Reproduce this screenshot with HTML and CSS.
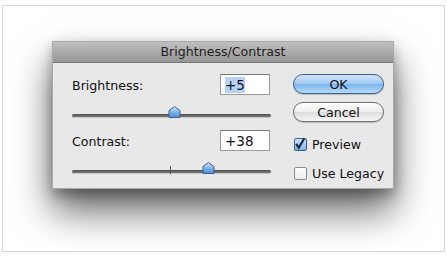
FILE: index.html
```html
<!DOCTYPE html>
<html lang="en">
<head>
  <meta charset="UTF-8">
  <title>Brightness/Contrast</title>
  <link rel="stylesheet" href="styles.css">
</head>
<body>
  <div class="frame">
    <div class="dialog">
      <div class="titlebar">Brightness/Contrast</div>
      <div class="dialog-body">
        <div class="controls">
          <div class="field-row">
            <span class="label">Brightness:</span>
            <span class="value-box"><span class="selected">+5</span></span>
          </div>
          <div class="slider">
            <div class="track"></div>
            <svg class="thumb" style="left: 96px" width="13" height="12" viewBox="0 0 13 12">
              <defs>
                <linearGradient id="thumbFill" x1="0" y1="0" x2="0" y2="1">
                  <stop offset="0" stop-color="#d6e8fb"/>
                  <stop offset="0.5" stop-color="#7fb3ea"/>
                  <stop offset="1" stop-color="#4a8fdc"/>
                </linearGradient>
              </defs>
              <path d="M6.5 0.5 L12 4.5 L12 11.5 L1 11.5 L1 4.5 Z" fill="url(#thumbFill)" stroke="#3a5f8f" stroke-width="1"/>
            </svg>
          </div>
          <div class="field-row">
            <span class="label">Contrast:</span>
            <span class="value-box">+38</span>
          </div>
          <div class="slider">
            <div class="track"></div>
            <div class="tick" style="left: 98px"></div>
            <svg class="thumb" style="left: 130px" width="13" height="12" viewBox="0 0 13 12">
              <path d="M6.5 0.5 L12 4.5 L12 11.5 L1 11.5 L1 4.5 Z" fill="url(#thumbFill)" stroke="#3a5f8f" stroke-width="1"/>
            </svg>
          </div>
        </div>
        <div class="actions">
          <button class="btn btn-default">OK</button>
          <button class="btn">Cancel</button>
          <label class="check check-first">
            <span class="box box-on">
              <svg width="14" height="15" viewBox="0 0 14 15">
                <path d="M2.5 8 L5.5 12.5 L12 1.5" fill="none" stroke="#1a2a44" stroke-width="2.4"/>
              </svg>
            </span>
            Preview
          </label>
          <label class="check">
            <span class="box"></span>
            Use Legacy
          </label>
        </div>
      </div>
    </div>
  </div>
</body>
</html>
```

FILE: styles.css
```css
/* page */
body {
  margin: 0;
  background: #fff;
  font-family: "DejaVu Sans", "Liberation Sans", sans-serif;
  font-size: 12.6px;
  color: #111;
}

/* light frame round the picture */
.frame {
  margin: 5px 2px 1px 2px;
  height: 247px;
  border: 1px solid #d6d6d6;
  padding: 35px 0 0 49px;
  box-sizing: border-box;
}

/* the dialog window */
.dialog {
  width: 342px;
  height: 148px;
  background: #e8e8e8;
  border: 1px solid #a9a9a9;
  box-sizing: border-box;
  box-shadow: 0 22px 36px rgba(0, 0, 0, 0.6), 0 6px 12px rgba(0, 0, 0, 0.3);
}

.titlebar {
  height: 20px;
  line-height: 20px;
  text-align: center;
  color: #1c1c1c;
  background: linear-gradient(#c0c0c0, #969696);
  border-bottom: 1px solid #777;
}

.dialog-body {
  display: flex;
  gap: 24px;
  padding: 11px 0 0 19px;
}

/* left column: labels, values and sliders */
.controls {
  width: 197px;
  display: flex;
  flex-direction: column;
}

.field-row {
  height: 21px;
  display: flex;
  align-items: center;
  justify-content: space-between;
}

.label {
  padding-top: 1px;
}

.value-box {
  width: 50px;
  height: 21px;
  box-sizing: border-box;
  background: #fff;
  border: 1px solid #9a9a9a;
  border-top-color: #7a7a7a;
  padding: 2px 0 0 4px;
  margin-right: -1px;
  font-size: 13.5px;
  line-height: 16px;
}

.selected {
  background: #b5d3f7;
}

.slider {
  position: relative;
  height: 35px;
}

.track {
  position: absolute;
  left: 0;
  right: -2px;
  top: 19px;
  height: 3px;
  border-radius: 2px;
  background: linear-gradient(#4e4e4e, #7a7a7a);
  box-shadow: 0 1px 0 #c4c4c4;
}

.tick {
  position: absolute;
  top: 15px;
  width: 1px;
  height: 8px;
  background: #555;
}

.thumb {
  position: absolute;
  top: 11px;
}

/* right column: buttons and checkboxes */
.actions {
  width: 91px;
  display: flex;
  flex-direction: column;
  align-items: flex-start;
}

.btn {
  width: 91px;
  height: 20px;
  border-radius: 10px;
  border: 1px solid #6e6e6e;
  background: linear-gradient(#ffffff, #eeeeee 50%, #dcdcdc 51%, #f6f6f6);
  font-family: inherit;
  font-size: 12.6px;
  color: #111;
  padding: 0;
  margin-bottom: 8px;
  box-shadow: 0 1px 1px rgba(0, 0, 0, 0.2);
}

.btn-default {
  border-color: #3b5f8e;
  background: linear-gradient(#d4e6fa, #9ec8f3 50%, #7db5ee 51%, #b8dbfb);
}

.check {
  display: flex;
  align-items: center;
  gap: 5px;
  height: 13px;
  margin: 16px 0 0 1px;
  white-space: nowrap;
}

.check-first {
  margin-top: 8px;
}

.box {
  flex: none;
  width: 13px;
  height: 13px;
  box-sizing: border-box;
  border: 1px solid #8a8a8a;
  border-radius: 2px;
  background: linear-gradient(#ffffff, #ececec);
  display: flex;
}

.box-on {
  border-color: #3b5f8e;
  background: linear-gradient(#cfe3f9, #7fb3ea);
  overflow: visible;
}

.box-on svg {
  margin: -3px 0 0 -1px;
}
```
